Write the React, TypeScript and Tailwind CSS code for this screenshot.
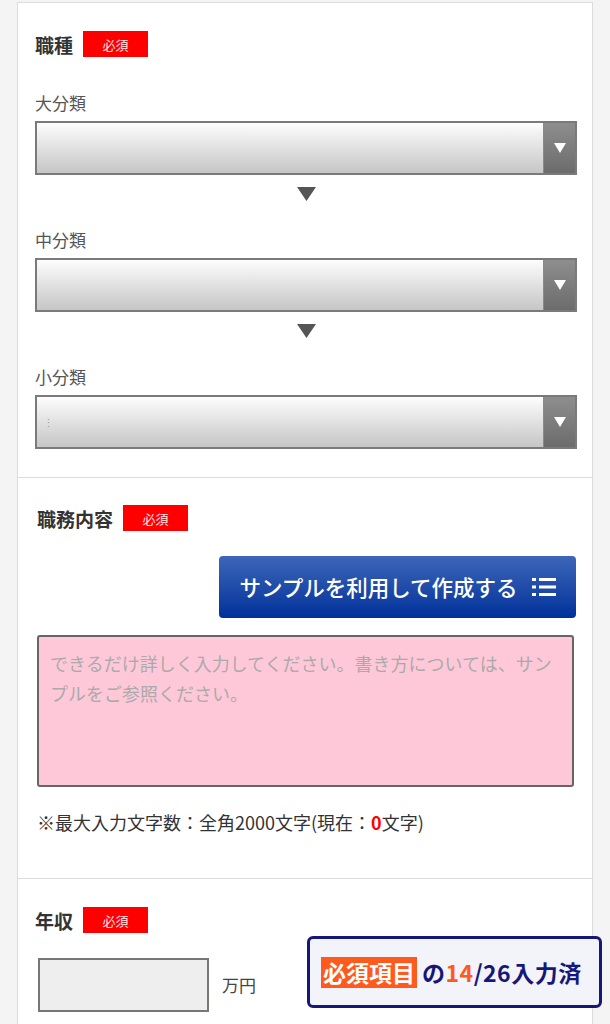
import React from 'react'

const jp = { fontFamily: '"Noto Sans CJK JP", "Noto Sans", sans-serif' }

function Badge() {
  return (
    <span className="inline-flex h-[26px] w-[65px] items-center justify-center bg-[#ff0000] text-[13px] leading-none text-[#ffe6e6]">
      必須
    </span>
  )
}

function Heading({ title }: { title: string }) {
  return (
    <div className="flex h-[26px] items-center gap-[10px]">
      <span className="text-[19px] font-bold leading-none text-[#333]">{title}</span>
      <Badge />
    </div>
  )
}

function SelectBox({ dots }: { dots?: boolean }) {
  return (
    <div className="flex h-[54px] w-full border-2 border-[#7a7a7a] bg-gradient-to-b from-[#fdfdfd] to-[#c6c6c6]">
      <div className="flex flex-1 items-center pl-[6px]">
        {dots && <span className="text-[11px] leading-[5px] text-[#999]">⋮</span>}
      </div>
      <div className="flex w-[32px] items-center justify-center border-l border-[#8a8a8a] bg-gradient-to-b from-[#8e8e8e] to-[#6c6c6c]">
        <svg width="12" height="10" viewBox="0 0 12 10">
          <path d="M0 0 H12 L6 10 Z" fill="#fff" />
        </svg>
      </div>
    </div>
  )
}

function DownArrow() {
  return (
    <div className="flex justify-center pt-[12px] pb-[27px]">
      <svg width="19" height="14" viewBox="0 0 19 14">
        <path d="M0 0 H19 L9.5 14 Z" fill="#555" />
      </svg>
    </div>
  )
}

function Label({ text }: { text: string }) {
  return <div className="mb-[6px] text-[17px] leading-[24px] text-[#555]">{text}</div>
}

export default function App() {
  return (
    <div style={jp} className="relative min-h-[1024px] w-full bg-[#f4f4f4] pt-[2px]">
      <div className="mx-[17px] border-x border-t border-[#dcdcdc] bg-white">
        {/* 職種 */}
        <section className="border-b border-[#dcdcdc] pt-[28px] pb-[28px] pl-[17px] pr-[15px]">
          <Heading title="職種" />
          <div className="mt-[34px]">
            <Label text="大分類" />
            <SelectBox />
            <DownArrow />
            <Label text="中分類" />
            <SelectBox />
            <DownArrow />
            <Label text="小分類" />
            <SelectBox dots />
          </div>
        </section>

        {/* 職務内容 */}
        <section className="border-b border-[#dcdcdc] pt-[27px] pb-[44px] pl-[19px] pr-[18px]">
          <Heading title="職務内容" />
          <div className="-mr-[2px] mt-[25px] flex justify-end">
            <button className="flex h-[62px] w-[357px] items-center justify-center gap-[14px] rounded-[4px] bg-gradient-to-b from-[#3d66b8] to-[#00309a] text-[21.5px] font-medium text-white">
              <span>サンプルを利用して作成する</span>
              <svg width="24" height="20" viewBox="0 0 24 20">
                <rect x="0" y="1" width="4" height="3" fill="#fff" />
                <rect x="0" y="8.5" width="4" height="3" fill="#fff" />
                <rect x="0" y="16" width="4" height="3" fill="#fff" />
                <rect x="7" y="1" width="17" height="3" fill="#fff" />
                <rect x="7" y="8.5" width="17" height="3" fill="#fff" />
                <rect x="7" y="16" width="17" height="3" fill="#fff" />
              </svg>
            </button>
          </div>
          <div className="mt-[17px] h-[152px] w-full rounded-[3px] border-2 border-[#666] bg-[#ffc8d9] px-[11px] pt-[11px] text-[18px] leading-[30px] text-[#aaa]">
            できるだけ詳しく入力してください。書き方については、サンプルをご参照ください。
          </div>
          <div className="mt-[23px] text-[18px] leading-[24px] text-[#333]">
            ※最大入力文字数：全角2000文字(現在：<span className="font-bold text-[#ff0000]">0</span>文字)
          </div>
        </section>

        {/* 年収 */}
        <section className="pt-[28px] pb-[40px] pl-[17px] pr-[15px]">
          <Heading title="年収" />
          <div className="mt-[25px] flex items-center gap-[13px] pl-[3px]">
            <div className="h-[54px] w-[171px] border-2 border-[#777] bg-[#eeeeee]" />
            <span className="text-[17px] text-[#444]">万円</span>
          </div>
        </section>
      </div>

      {/* 入力状況 */}
      <div className="absolute left-[307px] top-[936px] flex h-[72px] w-[295px] items-center rounded-[6px] border-[3px] border-[#17177a] bg-[#f3f3fa] pl-[11px]">
        <span className="bg-[#ff5a1e] px-[2px] text-[23px] font-bold leading-[31px] text-white">必須項目</span>
        <span className="ml-[5px] text-[23px] font-bold tracking-[0.5px] text-[#17177a]">
          の<span className="text-[#ff5a1e]">14</span>/26入力済
        </span>
      </div>
    </div>
  )
}
